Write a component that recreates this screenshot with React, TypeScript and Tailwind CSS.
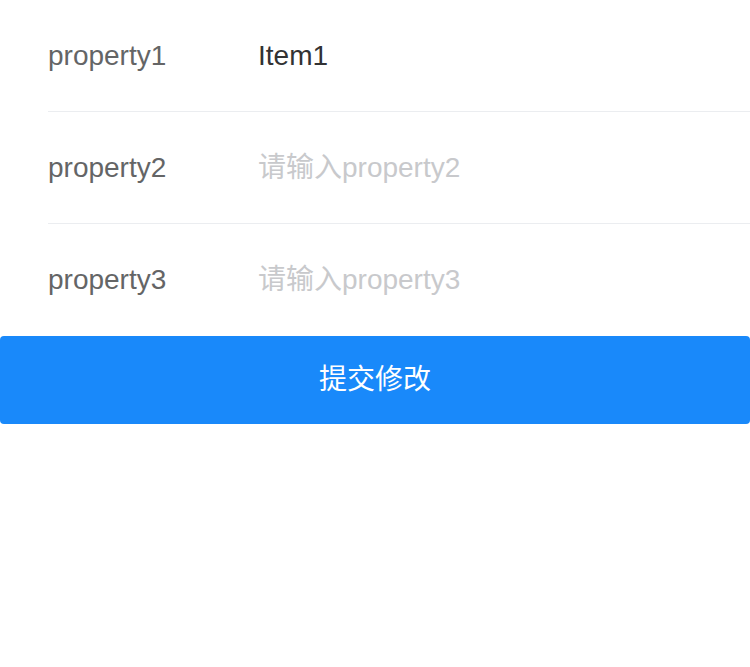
import { useState } from 'react';

interface Field {
  name: string;
  label: string;
  value: string;
}

const initialFields: Field[] = [
  { name: 'property1', label: 'property1', value: 'Item1' },
  { name: 'property2', label: 'property2', value: '' },
  { name: 'property3', label: 'property3', value: '' },
];

export default function App() {
  const [fields, setFields] = useState<Field[]>(initialFields);

  const updateField = (index: number, value: string) => {
    setFields((prev) => prev.map((f, i) => (i === index ? { ...f, value } : f)));
  };

  return (
    <main
      className="min-h-screen bg-white"
      style={{ fontFamily: '"Liberation Sans", "Noto Sans CJK SC", sans-serif' }}
    >
      <form
        onSubmit={(e) => e.preventDefault()}
        className="flex flex-col"
      >
        {fields.map((field, index) => (
          <div key={field.name} className="bg-white pl-[48px]">
            <div
              className={
                index < fields.length - 1
                  ? 'flex items-center h-[112px] border-b border-[#ebedf0]'
                  : 'flex items-center h-[112px]'
              }
            >
              <label
                htmlFor={field.name}
                className="w-[210px] shrink-0 text-[28px] leading-[48px] text-[#646566]"
              >
                {field.label}
              </label>
              <input
                id={field.name}
                value={field.value}
                onChange={(e) => updateField(index, e.target.value)}
                placeholder={`请输入${field.label}`}
                className="flex-1 min-w-0 bg-transparent outline-none text-[28px] leading-[48px] text-[#323233] placeholder:text-[#c8c9cc]"
              />
            </div>
          </div>
        ))}

        <button
          type="submit"
          className="h-[88px] w-full rounded-[4px] bg-[#1989fa] text-[28px] text-white"
        >
          提交修改
        </button>
      </form>
    </main>
  );
}
